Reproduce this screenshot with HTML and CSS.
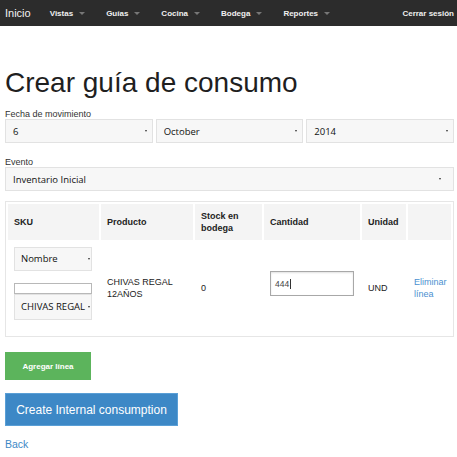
FILE: index.html
```html
<!DOCTYPE html>
<html lang="es">
<head>
<meta charset="utf-8">
<title>Crear guía de consumo</title>
<link rel="stylesheet" href="styles.css">
</head>
<body>
<nav class="navbar">
  <a class="brand" href="#">Inicio</a>
  <ul class="menu">
    <li class="menu-item">Vistas<span class="caret"></span></li>
    <li class="menu-item">Guías<span class="caret"></span></li>
    <li class="menu-item">Cocina<span class="caret"></span></li>
    <li class="menu-item">Bodega<span class="caret"></span></li>
    <li class="menu-item">Reportes<span class="caret"></span></li>
  </ul>
  <a class="logout" href="#">Cerrar sesión</a>
</nav>

<main class="page">
  <h1 class="title">Crear guía de consumo</h1>

  <div class="field">
    <label class="label">Fecha de movimiento</label>
    <div class="date-row">
      <div class="select"><span class="select-text">6</span><span class="select-caret"></span></div>
      <div class="select"><span class="select-text">October</span><span class="select-caret"></span></div>
      <div class="select"><span class="select-text">2014</span><span class="select-caret"></span></div>
    </div>
  </div>

  <div class="field field-event">
    <label class="label">Evento</label>
    <div class="select select-wide"><span class="select-text">Inventario Inicial</span><span class="select-caret"></span></div>
  </div>

  <div class="lines-box">
    <table class="lines">
      <colgroup>
        <col class="c-sku"><col class="c-prod"><col class="c-stock"><col class="c-qty"><col class="c-unit"><col class="c-act">
      </colgroup>
      <thead>
        <tr>
          <th>SKU</th>
          <th>Producto</th>
          <th>Stock en bodega</th>
          <th>Cantidad</th>
          <th>Unidad</th>
          <th></th>
        </tr>
      </thead>
      <tbody>
        <tr>
          <td class="sku-cell">
            <div class="select select-small"><span class="select-text">Nombre</span><span class="select-caret"></span></div>
            <div class="search-input"></div>
            <div class="select select-small select-tall"><span class="select-text">CHIVAS REGAL</span><span class="select-caret edge"></span></div>
          </td>
          <td>CHIVAS REGAL 12AÑOS</td>
          <td>0</td>
          <td><div class="qty-input">444<span class="cursor"></span></div></td>
          <td>UND</td>
          <td><a class="link" href="#">Eliminar línea</a></td>
        </tr>
      </tbody>
    </table>
  </div>

  <button class="btn btn-add" type="button">Agregar línea</button>
  <button class="btn btn-create" type="button">Create Internal consumption</button>
  <a class="back" href="#">Back</a>
</main>
</body>
</html>
```

FILE: styles.css
```css
* { box-sizing: border-box; }

body {
  margin: 0;
  font-family: "Liberation Sans", Arial, sans-serif;
  color: #222;
  background: #fff;
}

a { text-decoration: none; }

.navbar {
  height: 26px;
  background: #2c2c2c;
  display: flex;
  align-items: center;
  padding: 0 3px 0 5px;
}

.brand {
  color: #f2f2f2;
  font-size: 11px;
  margin-right: 19px;
}

.menu {
  display: flex;
  list-style: none;
  margin: 0;
  padding: 0;
  flex: 1;
}

.menu-item {
  color: #f0f0f0;
  font-size: 8px;
  font-weight: bold;
  display: flex;
  align-items: center;
  padding-right: 21px;
}

.caret {
  width: 0;
  height: 0;
  margin-left: 6px;
  border-left: 3.5px solid transparent;
  border-right: 3.5px solid transparent;
  border-top: 3px solid #777;
}

.logout {
  color: #f0f0f0;
  font-size: 8px;
  font-weight: bold;
}

.page {
  padding: 0 3px 0 5px;
}

.title {
  margin: 41px 0 0;
  font-size: 28px;
  line-height: 31px;
  font-weight: normal;
  color: #1f1f1f;
}

.field { margin-top: 11px; }
.field-event { margin-top: 14px; }

.label {
  display: block;
  font-size: 9px;
  line-height: 10px;
  color: #333;
  margin-bottom: 0;
}

.date-row {
  display: grid;
  grid-template-columns: 1fr 1fr 1fr;
  gap: 3px;
}

.select {
  height: 24px;
  background: #f7f7f7;
  border: 1px solid #e2e2e2;
  display: flex;
  align-items: center;
  padding: 0 5px 0 7px;
  font-family: "Open Sans", "DejaVu Sans", sans-serif;
  font-size: 9.5px;
  color: #111;
  overflow: hidden;
}

.select-text {
  flex: 1;
  white-space: nowrap;
}

.select-caret {
  width: 0;
  height: 0;
  border-left: 1.5px solid transparent;
  border-right: 1.5px solid transparent;
  border-top: 2px solid #333;
  margin-left: 4px;
  flex: none;
}

.select-caret.edge { margin-left: 1px; }

.select-wide { padding-right: 12px; }

.lines-box {
  margin-top: 10px;
  border: 1px solid #e6e6e6;
}

.lines {
  width: 100%;
  table-layout: fixed;
  border-collapse: separate;
  border-spacing: 2px;
  font-size: 9px;
}

.c-sku { width: 91px; }
.c-prod { width: 92px; }
.c-stock { width: 67px; }
.c-qty { width: 96px; }
.c-unit { width: 44px; }

.lines th {
  background: #f4f4f4;
  height: 36px;
  text-align: left;
  vertical-align: middle;
  padding: 0 6px;
  font-weight: bold;
  line-height: 12px;
  color: #222;
}

.lines td {
  vertical-align: middle;
  padding: 0 2px 0 6px;
  line-height: 12px;
  color: #222;
}

.lines td.sku-cell {
  padding: 5px 0 14px 6px;
}

.select-small {
  width: 78px;
  height: 24px;
  padding: 0 1px 0 6px;
  font-size: 9.5px;
}

.select-tall { height: 26px; }

.search-input {
  width: 78px;
  height: 11px;
  margin-top: 12px;
  border: 1px solid #b8b8b8;
  background: #fff;
}

.qty-input {
  width: 84px;
  height: 25px;
  border: 1px solid #a8a8a8;
  box-shadow: inset 0 1px 2px rgba(0,0,0,0.12);
  background: #fff;
  display: flex;
  align-items: center;
  padding-left: 4px;
  font-size: 8.5px;
  color: #444;
  margin-bottom: 9px;
}

.cursor {
  display: inline-block;
  width: 1px;
  height: 10px;
  background: #333;
  margin-left: 1px;
}

.link { color: #4a90d0; }

.btn {
  display: block;
  border: none;
  color: #fff;
  font-family: "Liberation Sans", Arial, sans-serif;
  padding: 0;
  border-radius: 0;
}

.btn-add {
  margin-top: 15px;
  width: 86px;
  height: 28px;
  background: #5cb45c;
  font-size: 8px;
  font-weight: bold;
}

.btn-create {
  margin-top: 13px;
  width: 173px;
  height: 33px;
  background: #3d88c6;
  border: 1px solid #5a9fd6;
  font-size: 12px;
}

.back {
  display: block;
  margin-top: 12px;
  font-size: 10.5px;
  line-height: 12px;
  color: #3d88c6;
  width: max-content;
}
```
